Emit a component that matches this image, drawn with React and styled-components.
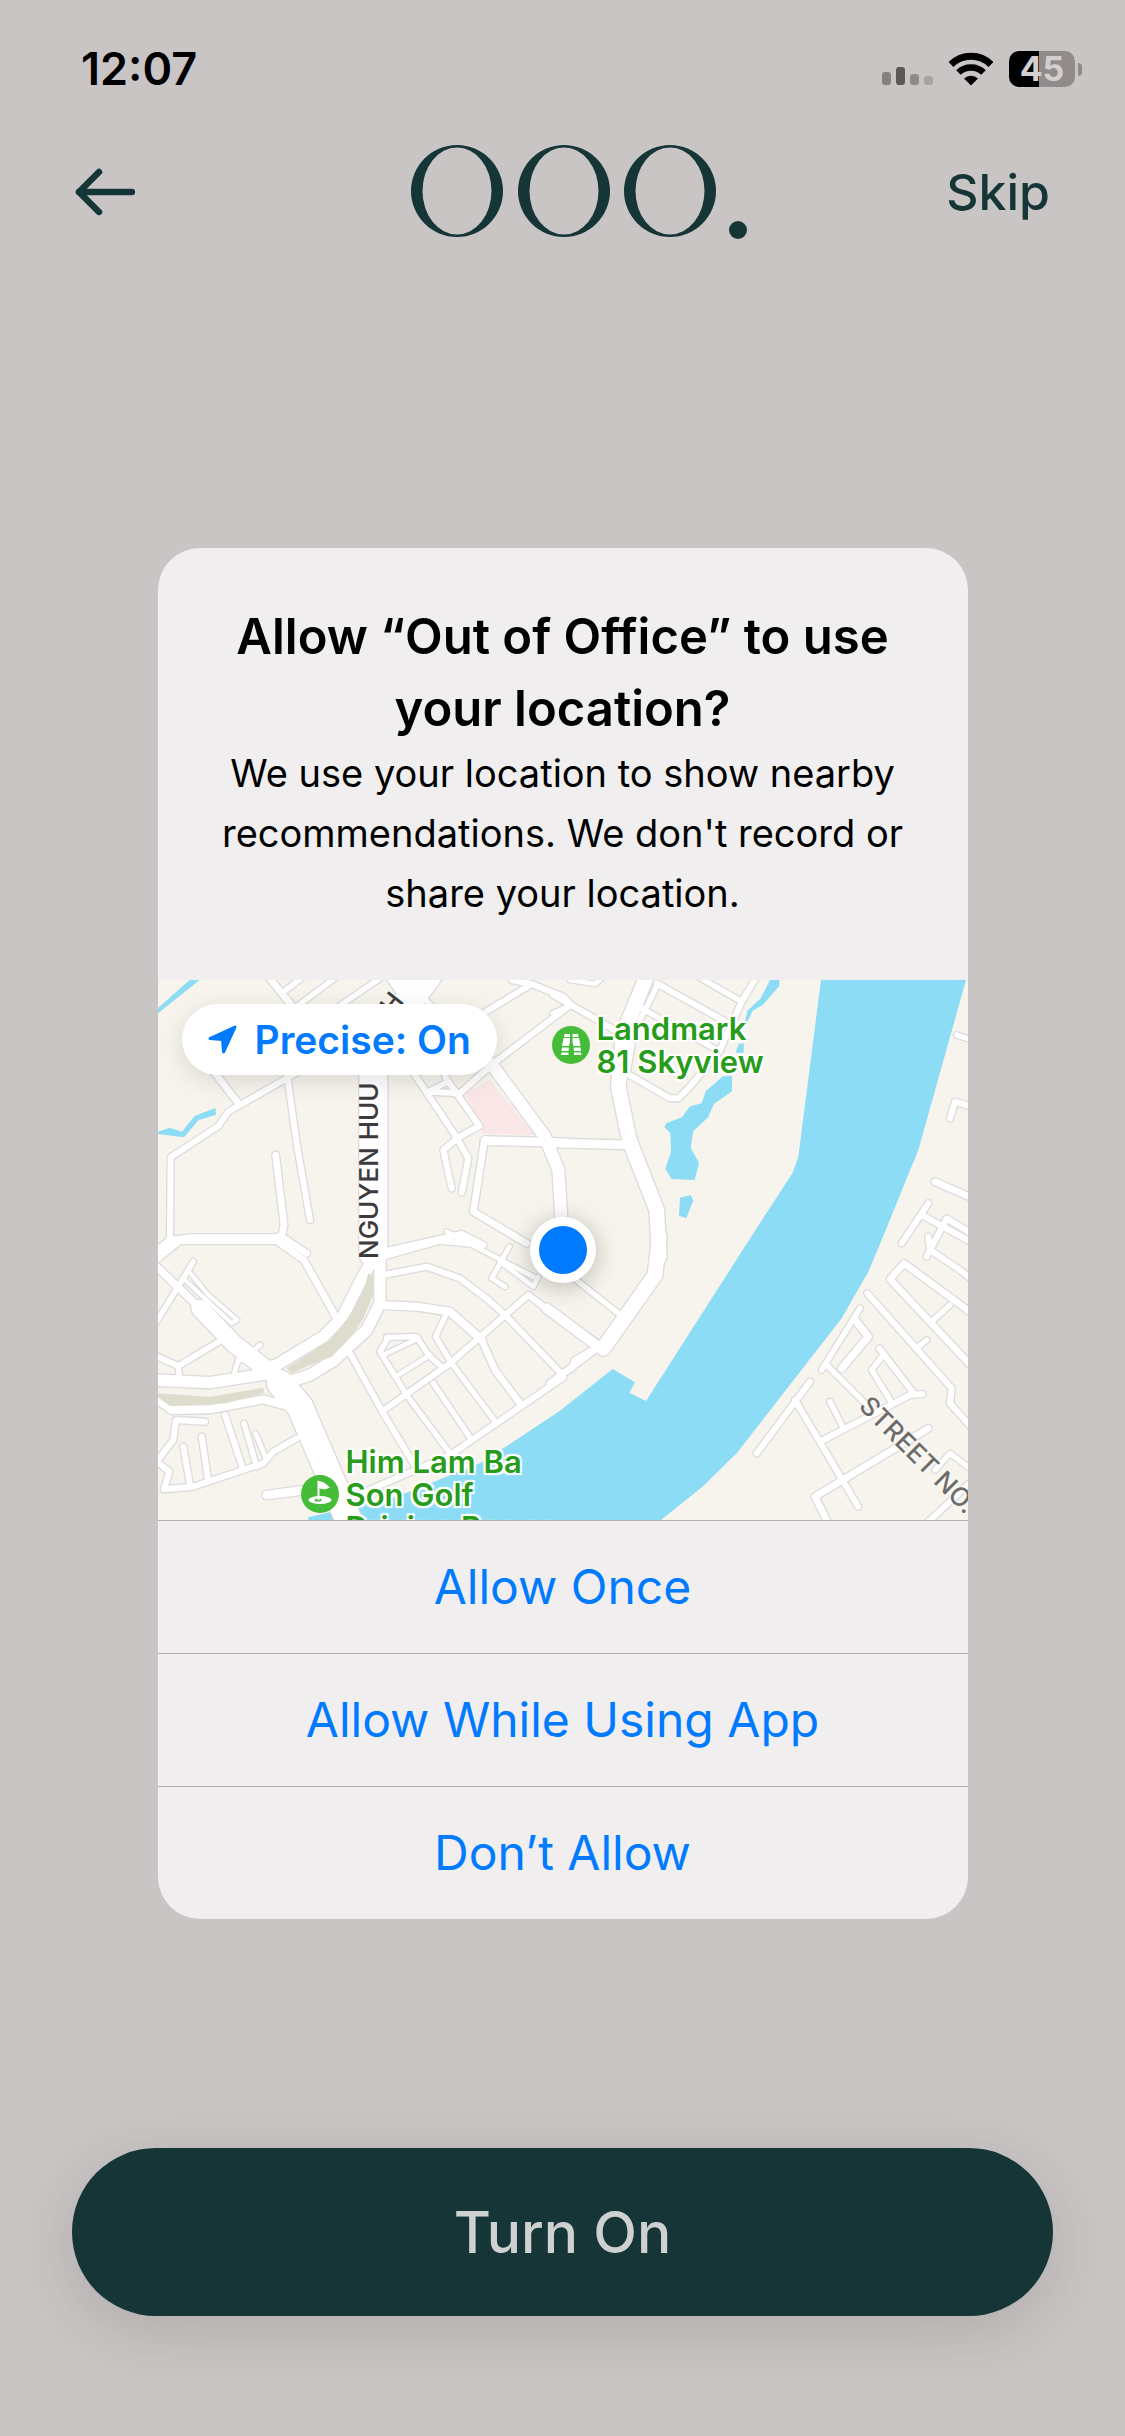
import React from 'react';
import styled, { createGlobalStyle } from 'styled-components';

const GlobalStyle = createGlobalStyle`
  * {
    box-sizing: border-box;
  }

  body {
    margin: 0;
    background: #c9c5c4;
    font-family: Inter, "Liberation Sans", sans-serif;
  }

  button {
    border: none;
    background: none;
    padding: 0;
    font-family: inherit;
    cursor: pointer;
  }
`;

const Screen = styled.div`
  display: flex;
  flex-direction: column;
  min-height: 100vh;
`;

const StatusBar = styled.div`
  display: flex;
  align-items: center;
  justify-content: space-between;
  height: 138px;
  padding: 0 43px 0 81px;
`;

const Time = styled.span`
  font-size: 45px;
  font-weight: 600;
  line-height: 56px;
  color: #000;
`;

const StatusIcons = styled.div`
  display: flex;
  align-items: center;
  gap: 15px;
`;

const Battery = styled.div`
  display: flex;
  align-items: center;
  gap: 3px;
`;

const BatteryBody = styled.span`
  width: 66px;
  height: 36px;
  border-radius: 10px;
  background: linear-gradient(to right, #000 45%, #918c8b 45%);
  color: #d3cfce;
  font-size: 34px;
  font-weight: 700;
  line-height: 36px;
  text-align: center;
`;

const BatteryTip = styled.span`
  width: 4px;
  height: 13px;
  border-radius: 0 4px 4px 0;
  background: #918c8b;
`;

const Header = styled.header`
  display: grid;
  grid-template-columns: 1fr auto 1fr;
  align-items: center;
  height: 108px;
  padding: 0 75px;
`;

const BackButton = styled.button`
  display: flex;
  justify-self: start;
`;

const SkipButton = styled.button`
  justify-self: end;
  color: #163537;
  font-size: 50px;
  font-weight: 500;
  line-height: 56px;
`;

const Logo = styled.svg`
  display: block;
  margin-left: 32px;
`;

const Main = styled.main`
  display: flex;
  flex: 1;
  align-items: center;
  justify-content: center;
  padding-top: 72px;
`;

const Dialog = styled.section`
  width: 72%;
  overflow: hidden;
  border-radius: 42px;
  background: #f0eeee;
`;

const DialogText = styled.div`
  padding: 53px 48px 55px;
  text-align: center;
  color: #000;
`;

const DialogTitle = styled.h1`
  margin: 0;
  font-size: 49px;
  font-weight: 600;
  line-height: 72px;
`;

const DialogMessage = styled.p`
  margin: -2px 0 2px;
  font-size: 38px;
  line-height: 60px;
`;

const MapView = styled.div`
  position: relative;
  height: 540px;
  overflow: hidden;
  background: #f7f4ed;
`;

const MapDrawing = styled.svg`
  display: block;
  width: 100%;
  height: 100%;
`;

const PrecisePill = styled.button`
  position: absolute;
  top: 24px;
  left: 24px;
  display: flex;
  align-items: center;
  gap: 18px;
  height: 71px;
  padding: 0 26px;
  border-radius: 36px;
  background: #fff;
  box-shadow: 0 6px 24px rgba(0, 0, 0, 0.12);
  color: #007aff;
  font-size: 39px;
  font-weight: 600;
`;

const UserDot = styled.span`
  position: absolute;
  top: 50%;
  left: 50%;
  width: 66px;
  height: 66px;
  margin: -33px;
  border: 9px solid #fff;
  border-radius: 50%;
  background: #007aff;
  box-shadow: 0 4px 24px rgba(0, 0, 0, 0.25);
`;

const Place = styled.div`
  position: absolute;
  top: ${({ $top }) => $top}px;
  left: ${({ $left }) => $left}px;
  display: flex;
  align-items: center;
  gap: 7px;
  color: #279b1a;
  font-size: 31px;
  font-weight: 600;
  line-height: 33px;
  white-space: pre;
  text-shadow: 0 0 3px #fff, 2px 2px 1px #fff, -2px -2px 1px #fff, 2px -2px 1px #fff, -2px 2px 1px #fff;

  svg {
    flex: none;
  }
`;

const StreetName = styled.span`
  position: absolute;
  top: ${({ $top }) => $top}px;
  left: ${({ $left }) => $left}px;
  transform: rotate(${({ $angle }) => $angle}deg);
  transform-origin: left center;
  color: ${({ $color }) => $color};
  font-size: 26px;
  font-weight: 500;
  line-height: 26px;
  white-space: nowrap;
  text-shadow: 0 0 3px #fff, 0 0 3px #fff;
`;

const Choice = styled.button`
  display: block;
  width: 100%;
  height: 133px;
  border-top: 1px solid #b0aeae;
  color: #007aff;
  font-size: 48px;
`;

const Footer = styled.footer`
  padding: 0 72px 120px;
`;

const TurnOnButton = styled.button`
  width: 100%;
  height: 168px;
  border-radius: 84px;
  background: #163537;
  box-shadow: 0 15px 60px rgba(60, 50, 50, 0.16);
  color: #cfd1d0;
  font-size: 57px;
  font-weight: 500;
`;

// Each tile has its own origin; a road is [width, points]
const tiles = [
  {
    x: -24,
    y: -30,
    roads: [
      [18, '48,840 60,800 62,562 205,468 235,425 440,308'],
      [20, '180,290 265,400'],
      [18, '412,320 440,520 480,750'],
      [20, '377,555 402,765 395,800 365,803 130,803 60,810 10,850'],
      [20, '395,800 470,850'],
      [20, '355,20 440,125'],
      [16, '395,70 460,20'],
      [16, '440,110 560,20'],
      [16, '550,120 690,25'],
      [50, '735,20 770,70 860,10'],
      [16, '780,50 860,120'],
      [14, '800,120 840,60'],
      [84, '670,850 670,300 770,100 830,20'],
      [18, '1000,130 1145,42 1240,80 1262,104 1030,280 930,370 845,365'],
      [18, '1085,30 1145,42'],
      [36, '960,220 1030,290 1185,500 1225,600 1235,760'],
      [26, '1260,520 1185,516 1005,512'],
      [20, '1003,512 970,725 1130,820'],
      [18, '795,315 912,490 955,565 935,668'],
      [18, '885,320 988,468 925,502 880,540 905,655'],
      [16, '840,362 895,335'],
      [18, '700,845 935,792 1000,825'],
    ],
  },
  {
    x: 1206,
    y: -30,
    roads: [
      [44, '262,15 190,190 175,350 208,510 290,720 298,860'],
      [26, '-40,518 210,525'],
      [18, '-20,75 130,160 180,190'],
      [16, '-20,130 35,105'],
      [14, '30,30 105,42 130,20'],
      [18, '290,40 515,165'],
      [16, '245,115 480,245'],
      [16, '290,50 240,150'],
      [16, '415,20 545,95'],
      [18, '590,20 545,95 480,240 390,350 355,385 330,385 200,310'],
      [18, '215,225 200,310'],
      [16, '1190,195 1250,215'],
      [18, '1170,445 1185,395 1250,415'],
      [20, '1125,635 1250,690'],
      [18, '1025,820 1105,700'],
      [18, '1085,735 1250,825'],
      [18, '1100,860 1160,745 1250,800'],
    ],
  },
  {
    x: -24,
    y: 780,
    roads: [
      [20, '10,65 90,2 380,2 462,60 560,235'],
      [22, '10,70 150,205'],
      [52, '150,205 250,310 390,420'],
      [78, '390,430 450,500 600,850'],
      [34, '668,60 638,110 575,235 520,290 380,375 330,385'],
      [34, '690,10 690,190 650,270 550,362 480,405 400,430'],
      [34, '10,420 180,428 360,400'],
      [24, '10,470 65,510 180,508 340,478 420,500'],
      [18, '10,345 85,378 215,300'],
      [16, '85,378 88,415'],
      [16, '20,245 130,65'],
      [12, '118,95 175,165 262,240 245,250 105,120'],
      [14, '250,410 265,360 285,360'],
      [14, '295,345 330,315'],
      [18, '165,545 78,540 70,600 20,665 58,695 42,748 130,740 340,670 370,635 440,595'],
      [18, '100,620 120,735'],
      [18, '155,590 175,725'],
      [18, '225,525 280,690'],
      [16, '282,550 320,680'],
      [14, '317,580 350,660'],
      [18, '700,105 830,80 930,115 1015,180 1072,232 1235,402'],
      [24, '690,195 800,200 900,215 995,300'],
      [20, '995,300 1035,390 1110,490'],
      [18, '700,50 870,2 1000,15'],
      [18, '600,340 700,520 790,670'],
      [18, '705,508 900,370 1135,165 1280,275'],
      [16, '715,292 690,335 770,465 900,640'],
      [16, '710,292 800,290 835,345 875,380'],
      [14, '700,345 795,300'],
      [14, '740,408 840,345'],
      [16, '885,230 857,290 905,370 1040,550'],
      [16, '850,430 965,600'],
      [18, '600,775 900,645 1240,412'],
      [26, '350,765 480,748'],
      [14, '1078,20 1025,115 1065,140'],
      [14, '1050,65 1150,140 1165,110'],
      [14, '890,-25 1150,110'],
    ],
  },
  {
    x: 1206,
    y: 780,
    roads: [
      [44, '298,-10 285,105 130,325'],
      [16, '30,105 175,220'],
      [30, '-40,205 115,320'],
      [20, '-30,430 110,325'],
      [12, '35,390 40,360 90,330'],
      [18, '1105,-10 1110,30 1200,90 1250,130'],
      [20, '1250,230 1032,70 990,118 1250,395'],
      [16, '1120,240 1170,195'],
      [18, '922,160 1175,445 1170,490 1250,580'],
      [16, '1075,320 1100,300'],
      [16, '900,205 785,390'],
      [22, '885,240 925,290 845,385'],
      [16, '800,375 925,500'],
      [18, '958,325 1065,465'],
      [16, '970,345 935,390 990,480'],
      [18, '1088,462 1050,465 790,600'],
      [16, '810,485 848,560'],
      [18, '750,425 590,640'],
      [18, '705,480 895,800'],
      [20, '1105,565 765,770 810,860'],
      [18, '1100,850 1250,710'],
      [16, '1125,690 1170,640 1250,700'],
    ],
  },
];

const Roads = ({ color, extra = 0 }) => (
  <g fill="none" stroke={color} strokeLinecap="round" strokeLinejoin="round">
    {tiles.map((tile) => (
      <g key={`${tile.x}:${tile.y}`} transform={`translate(${tile.x} ${tile.y})`}>
        {tile.roads.map(([width, points]) => (
          <polyline key={points} points={points} strokeWidth={width + extra} />
        ))}
      </g>
    ))}
  </g>
);

const CityMap = () => (
  <MapDrawing viewBox="0 0 2430 1620" preserveAspectRatio="xMidYMid slice" aria-hidden="true">
    <rect width="2430" height="1620" fill="#f7f4ed" />
    <polygon points="921,342 996,300 1130,465 970,460 966,425" fill="#fae5e7" />
    <g fill="#8bdcf4">
      <polygon points="1989,0 1921,530 1904,578 1754,810 1464,1263 1414,1238 1431,1207 1364,1167 1206,1292 1036,1405 966,1450 716,1550 451,1612 451,1620 1509,1620 1636,1518 1736,1420 2051,1015 2131,875 2171,780 2281,510 2424,0" />
      <polygon points="0,84 95,0 125,0 0,100" />
      <polygon points="0,455 35,443 72,455 110,408 172,384 174,404 122,420 78,472 0,462" />
    </g>
    <Roads color="#dddbdc" extra={8} />
    <Roads color="#fff" />
    <g fill="#deddcd">
      <polygon points="631,880 648,890 644,950 616,1015 576,1075 521,1130 456,1155 401,1180 386,1165 516,1080 576,1005 614,940" />
      <polygon points="0,1240 156,1250 316,1223 318,1238 206,1270 36,1278 0,1252" />
    </g>
    <g fill="#8bdcf4">
      <polygon points="1836,0 1864,0 1864,18 1814,75 1784,92 1766,130 1760,130 1768,92 1808,55" />
      <polygon points="1742,192 1757,190 1757,218 1733,218" />
      <polygon points="1696,288 1722,288 1722,334 1668,372 1649,413 1606,453 1598,503 1623,548 1610,600 1541,597 1522,566 1539,516 1537,459 1519,442 1525,430 1572,412 1596,379 1631,370 1643,334" />
      <polygon points="1566,653 1598,645 1606,661 1585,714 1563,708" />
    </g>
  </MapDrawing>
);

const SignalIcon = () => (
  <svg width="51" height="34" viewBox="0 0 51 34" aria-hidden="true">
    <rect x="0" y="20" width="9" height="13" rx="3" fill="#858180" />
    <rect x="14" y="15" width="9" height="18" rx="3" fill="#5b5857" />
    <rect x="28" y="22" width="9" height="11" rx="3" fill="#8f8b8a" />
    <rect x="42" y="24" width="9" height="9" rx="3" fill="#a8a4a3" />
  </svg>
);

const WifiIcon = () => (
  <svg width="46" height="34" viewBox="0 0 46 34" aria-hidden="true">
    <path d="M3 12.500A28.500 28.500 0 0 1 43 12.500" fill="none" stroke="#000" strokeWidth="7" />
    <path d="M10.500 20.500A18 18 0 0 1 35.500 20.500" fill="none" stroke="#000" strokeWidth="6.500" />
    <path d="M16 26.500A10.500 10.500 0 0 1 30 26.500L23 33.500Z" fill="#000" />
  </svg>
);

const ArrowLeftIcon = () => (
  <svg width="60" height="48" viewBox="0 0 60 48" aria-hidden="true">
    <path
      d="M57 24H4M24 4L4 24L24 44"
      fill="none"
      stroke="#163537"
      strokeWidth="6.500"
      strokeLinecap="round"
      strokeLinejoin="round"
    />
  </svg>
);

const BrandLogo = () => (
  <Logo width="336" height="96" viewBox="0 0 336 96" role="img" aria-label="OOO.">
    {[46, 153, 259].map((cx) => (
      <g key={cx}>
        <circle cx={cx} cy="47" r="46" fill="#163537" />
        <ellipse cx={cx} cy="47" rx="34.500" ry="43.500" fill="#c9c5c4" />
      </g>
    ))}
    <circle cx="327" cy="86" r="9" fill="#163537" />
  </Logo>
);

const LocationIcon = () => (
  <svg width="29" height="29" viewBox="0 0 29 29" aria-hidden="true">
    <path
      d="M27 2L2 13.500L14.500 14.500L15.500 27Z"
      fill="#007aff"
      stroke="#007aff"
      strokeWidth="3"
      strokeLinejoin="round"
    />
  </svg>
);

const BinocularsIcon = () => (
  <svg width="38" height="38" viewBox="0 0 38 38" aria-hidden="true">
    <circle cx="19" cy="19" r="19" fill="#45bd38" />
    <g fill="#fff">
      <path d="M12.500 8H18V11H12Z M20.500 8H26L26.500 11H20.500Z" />
      <path d="M11.500 12H18V16L17 20H10Z M20.500 12H27L28.500 20H21.500L20.500 16Z" />
      <path d="M10 21.500H17L16.500 25H9.500Z M21.500 21.500H28.500L29 25H22Z" />
      <path d="M9.500 26.500H16.500V29H9Z M22 26.500H29L29.500 29H22Z" />
    </g>
  </svg>
);

const GolfIcon = () => (
  <svg width="38" height="38" viewBox="0 0 38 38" aria-hidden="true">
    <circle cx="19" cy="19" r="19" fill="#45bd38" />
    <ellipse cx="19" cy="25" rx="11.500" ry="4" fill="#fff" />
    <ellipse cx="17" cy="25" rx="3.500" ry="1.500" fill="#45bd38" />
    <path d="M16.500 5.500L23 7.500L29 12.500L24 14.500L18.500 13.500V25H16.500Z" fill="#fff" />
  </svg>
);

const choices = ['Allow Once', 'Allow While Using App', 'Don’t Allow'];

const App = () => (
  <Screen>
    <GlobalStyle />
    <StatusBar>
      <Time>12:07</Time>
      <StatusIcons>
        <SignalIcon />
        <WifiIcon />
        <Battery>
          <BatteryBody>45</BatteryBody>
          <BatteryTip />
        </Battery>
      </StatusIcons>
    </StatusBar>
    <Header>
      <BackButton aria-label="Back">
        <ArrowLeftIcon />
      </BackButton>
      <BrandLogo />
      <SkipButton>Skip</SkipButton>
    </Header>
    <Main>
      <Dialog role="dialog" aria-labelledby="dialog-title">
        <DialogText>
          <DialogTitle id="dialog-title">Allow “Out of Office” to use your location?</DialogTitle>
          <DialogMessage>
            We use your location to show nearby recommendations. We don't record or share your location.
          </DialogMessage>
        </DialogText>
        <MapView>
          <CityMap />
          <StreetName $top={266} $left={211} $angle={-90} $color="#3c3c3c">NGUYEN HUU</StreetName>
          <StreetName $top={18} $left={228} $angle={-52} $color="#3c3c3c">H</StreetName>
          <StreetName $top={408} $left={706} $angle={45} $color="#6e6c6a">STREET NO.</StreetName>
          <Place $top={32} $left={394}>
            <BinocularsIcon />
            <span>{'Landmark\n81 Skyview'}</span>
          </Place>
          <Place $top={465} $left={143}>
            <GolfIcon />
            <span>{'Him Lam Ba\nSon Golf\nDriving Range'}</span>
          </Place>
          <UserDot />
          <PrecisePill>
            <LocationIcon />
            Precise: On
          </PrecisePill>
        </MapView>
        {choices.map((choice) => (
          <Choice key={choice}>{choice}</Choice>
        ))}
      </Dialog>
    </Main>
    <Footer>
      <TurnOnButton>Turn On</TurnOnButton>
    </Footer>
  </Screen>
);

export default App;
